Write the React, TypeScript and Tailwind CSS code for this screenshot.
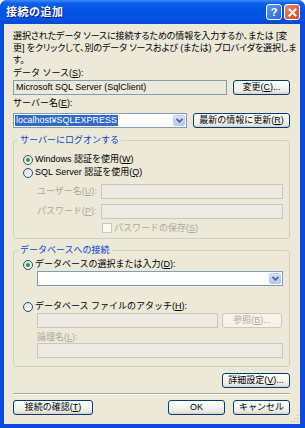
import type { ReactNode } from 'react'
import clsx from 'clsx'

const uiFont = "[font-family:'Liberation_Sans','Noto_Sans_CJK_JP',sans-serif]"

function Btn({ children, className, disabled = false }: { children: ReactNode; className?: string; disabled?: boolean }) {
  return (
    <div
      className={clsx(
        'h-[15px] shrink-0 rounded-[3px] border flex items-center justify-center text-[9px] leading-none whitespace-nowrap',
        disabled
          ? 'border-[#C9C7BA] bg-[#F5F4EA] text-[#ACA899]'
          : 'border-[#003C74] bg-[linear-gradient(to_bottom,#FFFFFF_0%,#F4F4F0_45%,#ECEBE6_80%,#D6D0C5_100%)] text-black',
        className,
      )}
    >
      {children}
    </div>
  )
}

function TextBox({ children, className, kind = 'white' }: { children?: ReactNode; className?: string; kind?: 'white' | 'readonly' | 'disabled' }) {
  return (
    <div
      className={clsx(
        'h-[15px] shrink-0 border flex items-center px-[2px] text-[9px] leading-none whitespace-nowrap overflow-hidden',
        kind === 'white' && 'border-[#7F9DB9] bg-white',
        kind === 'readonly' && 'border-[#7F9DB9] bg-[#ECE9D8]',
        kind === 'disabled' && 'border-[#C9C7BA] bg-[#EBEBE4]',
        className,
      )}
    >
      {children}
    </div>
  )
}

function Combo({ children, className }: { children?: ReactNode; className?: string }) {
  return (
    <div className={clsx('h-[15px] shrink-0 border border-[#7F9DB9] bg-white flex items-stretch p-[1px]', className)}>
      <div className="flex-1 flex items-center text-[9px] leading-none whitespace-nowrap overflow-hidden">{children}</div>
      <div className="w-[12px] rounded-[2px] border border-[#B9CCF6] bg-[linear-gradient(to_bottom,#D6E3FD_0%,#C1D3FB_50%,#B4C8F6_100%)] flex items-center justify-center">
        <svg width="7" height="5" viewBox="0 0 7 5">
          <path d="M0.5 0.8 L3.5 3.8 L6.5 0.8" fill="none" stroke="#4D6185" strokeWidth="1.6" />
        </svg>
      </div>
    </div>
  )
}

function Radio({ checked = false, children }: { checked?: boolean; children: ReactNode }) {
  return (
    <div className="h-[13px] flex items-center gap-[2px] pl-[9px]">
      <span className="w-[10px] h-[10px] rounded-full border border-[#1C5180] bg-[linear-gradient(135deg,#DCDCD7,#FFFFFF)] flex items-center justify-center">
        {checked && <span className="w-[4px] h-[4px] rounded-full bg-[#21A121]" />}
      </span>
      <span className="text-[9px] leading-none whitespace-nowrap">{children}</span>
    </div>
  )
}

function Group({ title, children, className }: { title: string; children: ReactNode; className?: string }) {
  return (
    <fieldset className={clsx('border border-[#D0D0BF] rounded-[3px]', className)}>
      <legend className="ml-[4px] px-[2px] h-[12px] text-[9px] leading-[12px] text-[#0046D5] whitespace-nowrap">{title}</legend>
      {children}
    </fieldset>
  )
}

export default function App() {
  return (
    <div className={clsx('w-[305px] h-[428px] flex flex-col rounded-t-[7px] overflow-hidden bg-[#0A4BDC]', uiFont)}>
      {/* title bar */}
      <div className="h-[24px] shrink-0 flex items-center pl-[6px] pr-[5px] bg-[linear-gradient(to_bottom,#3D8CF6_0%,#0B5FEC_14%,#0453E2_45%,#0552E3_80%,#0A47D4_100%)]">
        <span className="flex-1 text-[11px] font-bold text-white [text-shadow:1px_1px_0_#0A1E8A] tracking-[0.5px]">接続の追加</span>
        <div className="w-[16px] h-[16px] rounded-[3px] border border-white bg-[linear-gradient(135deg,#5F97F7,#2763E0)] flex items-center justify-center text-white text-[11px] font-bold leading-none">
          ?
        </div>
        <div className="ml-[2px] w-[16px] h-[16px] rounded-[3px] border border-white bg-[linear-gradient(135deg,#E88A68,#D8441C)] flex items-center justify-center">
          <svg width="9" height="9" viewBox="0 0 9 9">
            <path d="M1.5 1.5 L7.5 7.5 M7.5 1.5 L1.5 7.5" stroke="white" strokeWidth="2" strokeLinecap="square" />
          </svg>
        </div>
      </div>

      {/* client area */}
      <div className="relative flex-1 ml-[4px] mr-[5px] mb-[4px] bg-[#ECE9D8] pt-[6px] pl-[9px] pr-[10px] flex flex-col text-black">
        <p className="text-[9px] leading-[12px] whitespace-nowrap [font-feature-settings:'palt'] tracking-[-0.1px]">
          選択されたデータ ソースに接続するための情報を入力するか、または [変
          <br />
          更] をクリックして、別のデータ ソースおよび (または) プロバイダを選択しま
          <br />
          す。
        </p>

        <div className="mt-[1px] h-[12px] text-[9px] leading-[12px]">
          データ ソース(<u>S</u>):
        </div>
        <div className="mt-[1px] flex gap-[6px]">
          <TextBox kind="readonly" className="w-[214px]">Microsoft SQL Server (SqlClient)</TextBox>
          <Btn className="w-[57px]">
            変更(<u>C</u>)...
          </Btn>
        </div>

        <div className="mt-[2px] h-[12px] text-[9px] leading-[12px]">
          サーバー名(<u>E</u>):
        </div>
        <div className="mt-[4px] flex gap-[6px]">
          <Combo className="w-[174px]">
            <span className="bg-[#316AC5] text-white h-full flex items-center px-[1px]">localhost¥SQLEXPRESS</span>
          </Combo>
          <Btn className="w-[97px]">
            最新の情報に更新(<u>R</u>)
          </Btn>
        </div>

        <Group title="サーバーにログオンする" className="mt-[6px] pb-[4px]">
          <div className="mt-[7px]">
            <Radio checked>
              Windows 認証を使用(<u>W</u>)
            </Radio>
            <Radio>
              SQL Server 認証を使用(<u>Q</u>)
            </Radio>
          </div>
          <div className="mt-[5px] flex items-center pl-[23px]">
            <span className="w-[64px] text-[9px] leading-none text-[#ACA899]">
              ユーザー名(<u>U</u>):
            </span>
            <TextBox kind="disabled" className="w-[182px]" />
          </div>
          <div className="mt-[5px] flex items-center pl-[23px]">
            <span className="w-[64px] text-[9px] leading-none text-[#ACA899]">
              パスワード(<u>P</u>):
            </span>
            <TextBox kind="disabled" className="w-[182px]" />
          </div>
          <div className="mt-[3px] h-[12px] flex items-center gap-[2px] pl-[88px]">
            <span className="w-[10px] h-[10px] border border-[#CAC8BB] bg-[#F8F8F4]" />
            <span className="text-[9px] leading-none text-[#ACA899]">
              パスワードの保存(<u>S</u>)
            </span>
          </div>
        </Group>

        <Group title="データベースへの接続" className="mt-[5px] pb-[8px]">
          <div className="mt-[2px]">
            <Radio checked>
              データベースの選択または入力(<u>D</u>):
            </Radio>
          </div>
          <div className="pl-[23px]">
            <Combo className="w-[246px]" />
          </div>
          <div className="mt-[14px]">
            <Radio>
              データベース ファイルのアタッチ(<u>H</u>):
            </Radio>
          </div>
          <div className="pl-[23px] flex gap-[4px]">
            <TextBox kind="disabled" className="w-[181px]" />
            <Btn disabled className="w-[60px]">
              参照(<u>B</u>)...
            </Btn>
          </div>
          <div className="mt-[3px] pl-[23px] h-[12px] text-[9px] leading-[12px] text-[#ACA899]">
            論理名(<u>L</u>):
          </div>
          <div className="pl-[23px]">
            <TextBox kind="disabled" className="w-[246px]" />
          </div>
        </Group>

        <div className="mt-[6px] flex justify-end">
          <Btn className="w-[68px]">
            詳細設定(<u>V</u>)...
          </Btn>
        </div>

        <div className="mt-[5px] h-[2px] border-t border-b border-t-[#ACA899] border-b-white" />

        <div className="mt-[5px] flex items-center">
          <Btn className="w-[80px]">
            接続の確認(<u>T</u>)
          </Btn>
          <div className="flex-1" />
          <Btn className="w-[57px]">OK</Btn>
          <Btn className="ml-[8px] w-[57px]">キャンセル</Btn>
        </div>

        <svg className="absolute right-[1px] bottom-[1px]" width="10" height="10" viewBox="0 0 10 10">
          <g fill="#B4B1A3">
            <rect x="8" y="2" width="1" height="1" />
            <rect x="5" y="5" width="1" height="1" />
            <rect x="8" y="5" width="1" height="1" />
            <rect x="2" y="8" width="1" height="1" />
            <rect x="5" y="8" width="1" height="1" />
            <rect x="8" y="8" width="1" height="1" />
          </g>
        </svg>
      </div>
    </div>
  )
}
